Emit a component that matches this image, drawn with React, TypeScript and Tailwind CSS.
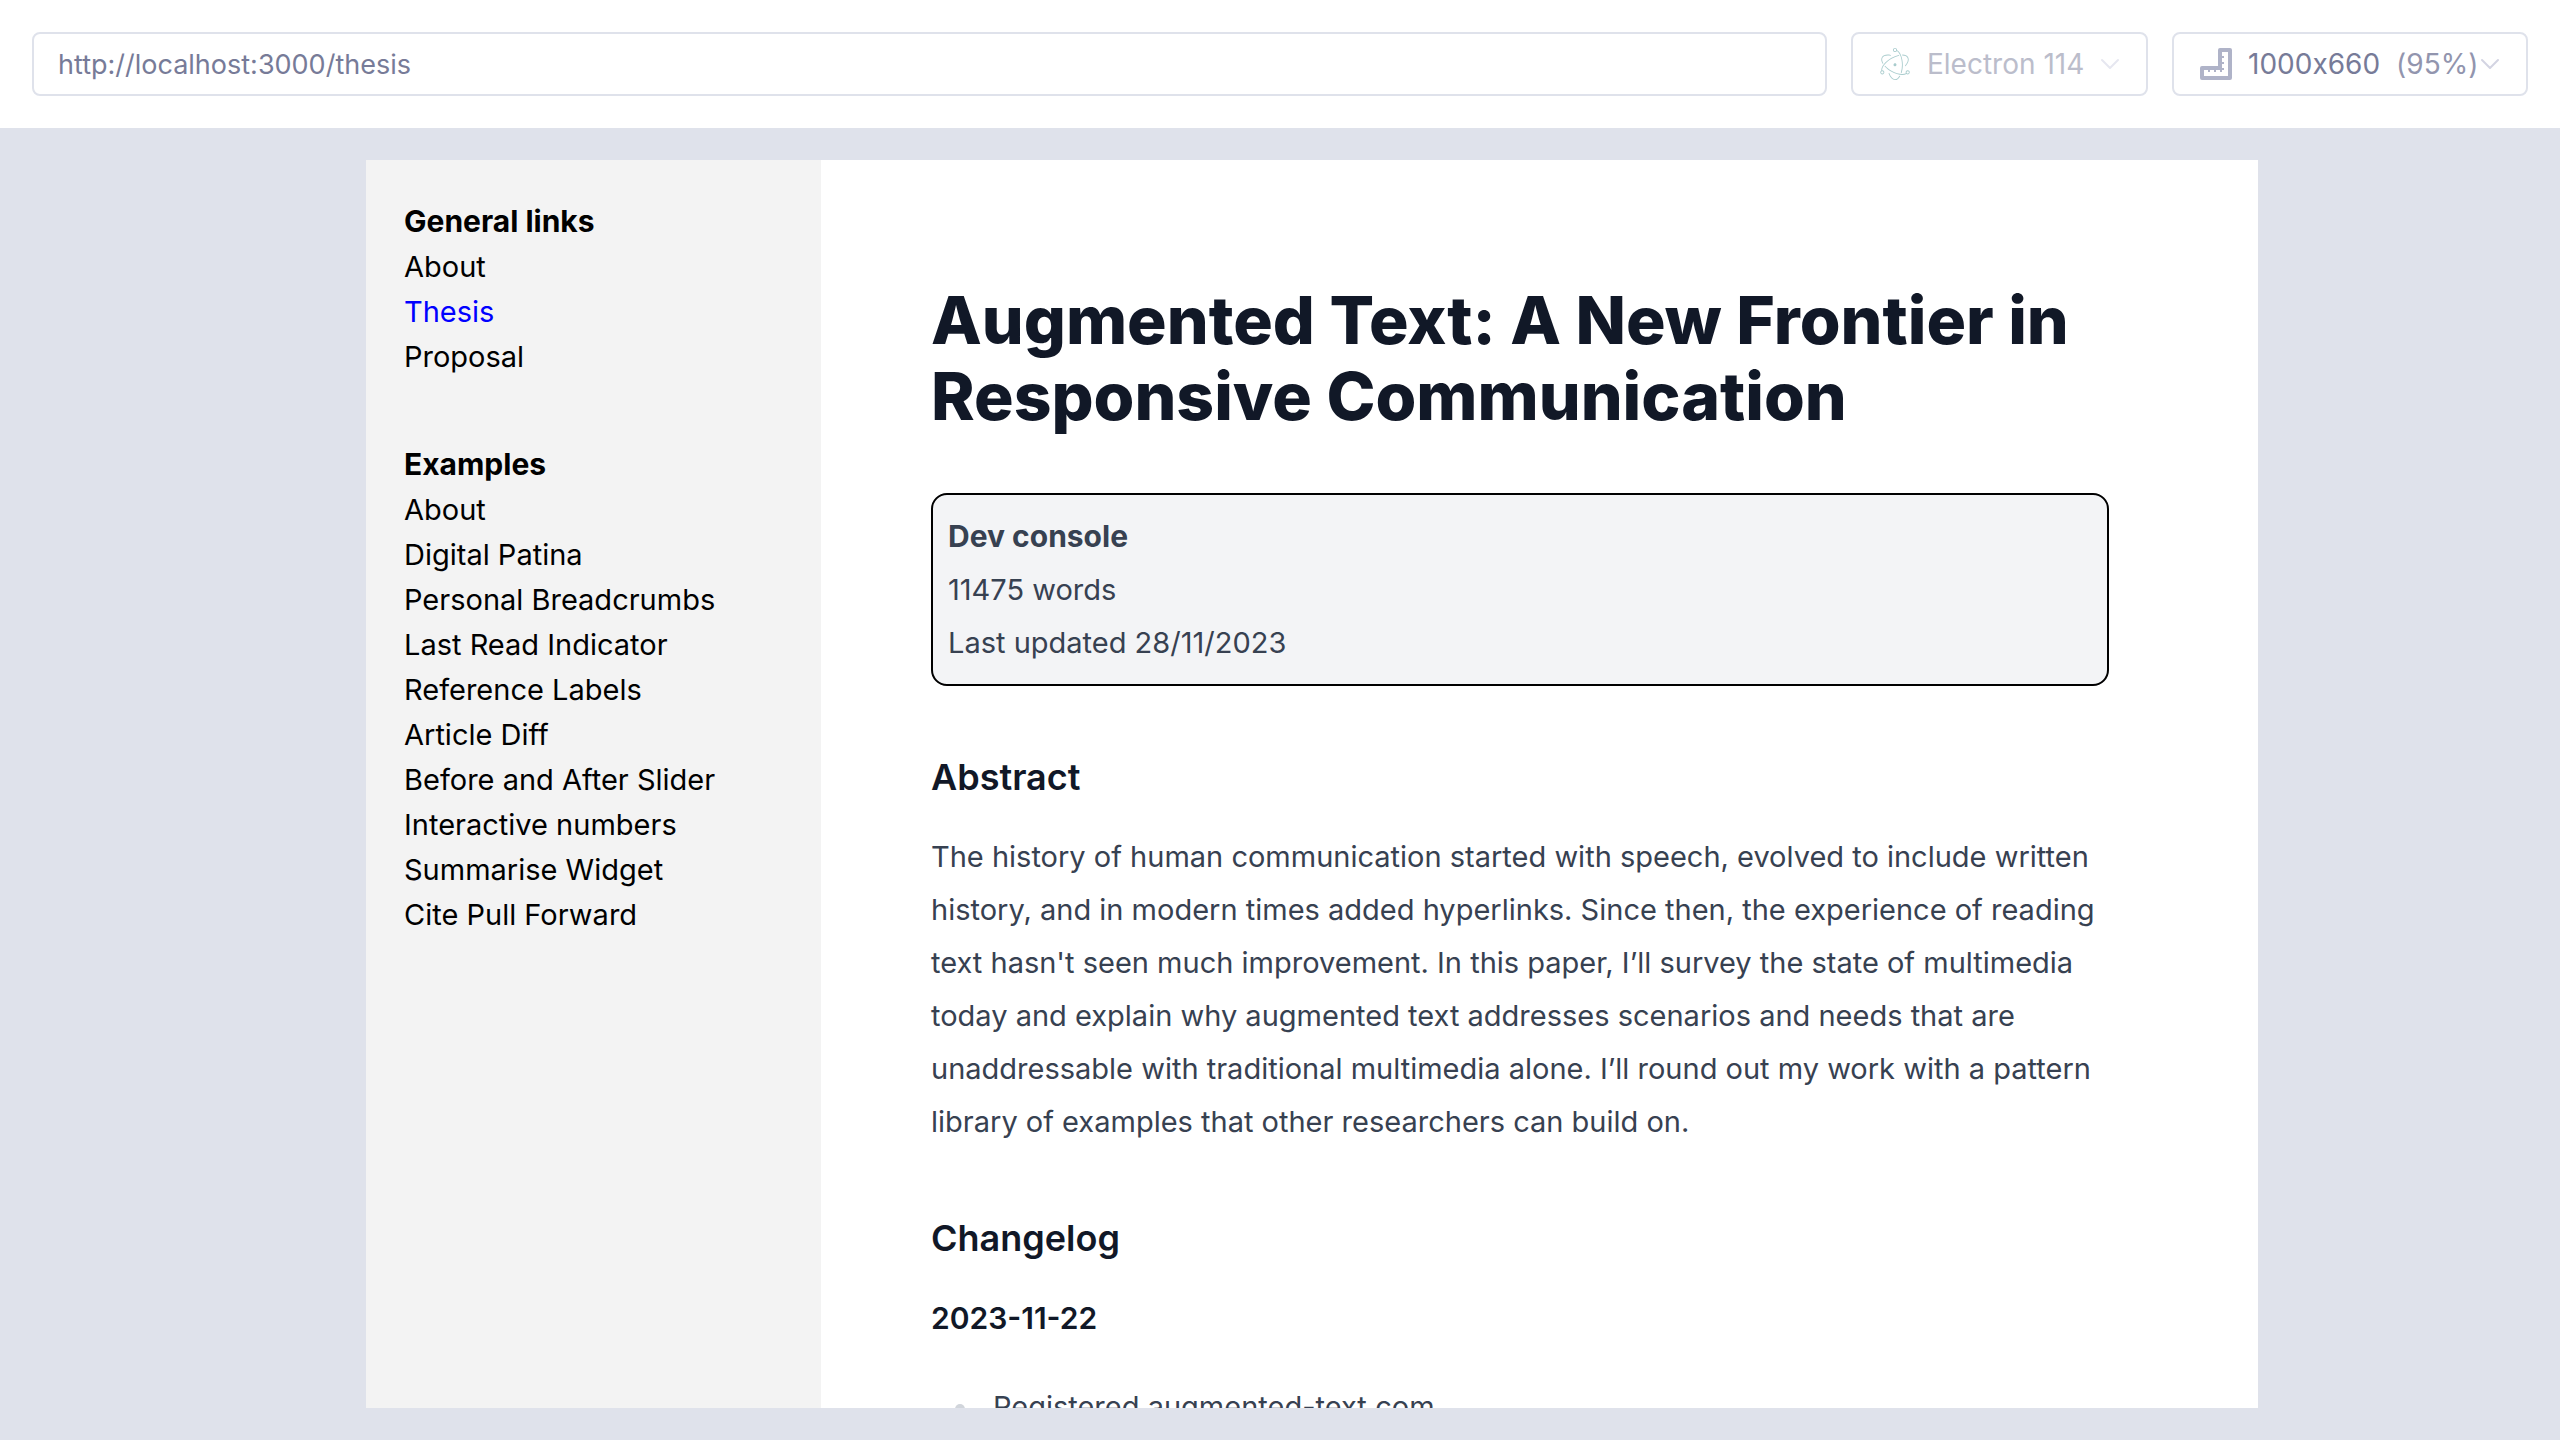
import { useState } from "react";
import { SiElectron } from "react-icons/si";

const generalLinks = ["About", "Thesis", "Proposal"];

const exampleLinks = [
  "About",
  "Digital Patina",
  "Personal Breadcrumbs",
  "Last Read Indicator",
  "Reference Labels",
  "Article Diff",
  "Before and After Slider",
  "Interactive numbers",
  "Summarise Widget",
  "Cite Pull Forward",
];

function ChevronIcon({ className }: { className: string }) {
  return (
    <svg viewBox="0 0 20 12" className={className} fill="none" aria-hidden="true">
      <path d="M2 2l8 8 8-8" stroke="currentColor" strokeWidth="2" strokeLinecap="round" strokeLinejoin="round" />
    </svg>
  );
}

function RulerIcon() {
  return (
    <svg viewBox="0 0 32 32" className="size-8 shrink-0 text-[#afb3c8]" fill="none" aria-hidden="true">
      <path
        d="M20 2h10v28H2V20h18z"
        stroke="currentColor"
        strokeWidth="4"
        strokeLinejoin="round"
      />
      <path
        d="M22 9h2M22 15h2M21 21h3M9 22v2M15 22v2M21 21v3"
        stroke="currentColor"
        strokeWidth="2"
      />
    </svg>
  );
}

function Toolbar() {
  const [url, setUrl] = useState("http://localhost:3000/thesis");
  return (
    <header className="flex h-32 shrink-0 items-center gap-6 bg-white px-8 text-[28px] [font-feature-settings:'calt'_0]">
      <input
        type="text"
        aria-label="Page address"
        value={url}
        onChange={(e) => setUrl(e.target.value)}
        className="h-16 min-w-0 flex-1 rounded-lg border-2 border-[#dfe2eb] bg-white px-6 text-[27px] text-[#777b98] outline-none"
      />
      <button
        type="button"
        disabled
        className="flex h-16 w-[297px] items-center rounded-lg border-2 border-[#dfe2eb] px-[26px] text-[#bbbdcb]"
      >
        <SiElectron className="size-8 shrink-0 text-[#a9cccd]" aria-hidden="true" />
        <span className="ml-4 flex-1 text-left whitespace-nowrap">Electron 114</span>
        <ChevronIcon className="h-3 w-5 shrink-0 text-[#e6e7f0]" />
      </button>
      <button
        type="button"
        className="flex h-16 w-[356px] items-center rounded-lg border-2 border-[#dfe2eb] px-[26px] text-[#777b98]"
      >
        <RulerIcon />
        <span className="ml-4 whitespace-nowrap">1000x660</span>
        <span className="ml-4 flex-1 text-left text-[#9295ae]">(95%)</span>
        <ChevronIcon className="h-3 w-5 shrink-0 text-[#d3d4e2]" />
      </button>
    </header>
  );
}

function LinkGroup({ title, links, current }: { title: string; links: string[]; current?: string }) {
  return (
    <section>
      <h2 className="text-[30px] leading-[46px] font-bold">{title}</h2>
      <ul>
        {links.map((name) => (
          <li key={name}>
            <a
              href="#"
              aria-current={name === current ? "page" : undefined}
              className={name === current ? "text-[#0000ff]" : "text-black"}
            >
              {name}
            </a>
          </li>
        ))}
      </ul>
    </section>
  );
}

function Sidebar() {
  return (
    <nav className="flex w-[455px] shrink-0 flex-col gap-[62px] bg-[#f3f3f3] px-[38px] pt-[38px] text-[29px] leading-[45px] text-black">
      <LinkGroup title="General links" links={generalLinks} current="Thesis" />
      <LinkGroup title="Examples" links={exampleLinks} />
    </nav>
  );
}

function Article() {
  return (
    <main className="min-w-0 flex-1 bg-white px-[110px] pt-[122px]">
      <article className="max-w-[1178px] text-[29px] leading-[53px] text-[#374151]">
        <h1 className="text-[66px] leading-[76px] font-extrabold text-[#111827]">
          Augmented Text: A New Frontier in Responsive Communication
        </h1>
        <div className="mt-[59px] rounded-2xl border-2 border-black bg-[#f3f4f6] p-[15px]">
          <p className="text-[30px] leading-[53px] font-bold">Dev console</p>
          <p>11475 words</p>
          <p>Last updated 28/11/2023</p>
        </div>
        <h2 className="mt-[61px] text-[36px] leading-[61px] font-semibold text-[#111827]">Abstract</h2>
        <p className="mt-[22px]">
          The history of human communication started with speech, evolved to include written history, and in modern
          times added hyperlinks. Since then, the experience of reading text hasn't seen much improvement. In this
          paper, I’ll survey the state of multimedia today and explain why augmented text addresses scenarios and needs
          that are unaddressable with traditional multimedia alone. I’ll round out my work with a pattern library of
          examples that other researchers can build on.
        </p>
        <h2 className="mt-[60px] text-[36px] leading-[61px] font-semibold text-[#111827]">Changelog</h2>
        <h3 className="mt-[27px] text-[30px] leading-[45px] font-semibold text-[#111827]">2023-11-22</h3>
        <ul className="mt-[39px] pl-6">
          <li className="flex items-center">
            <span className="mt-1 mr-7 size-2.5 shrink-0 rounded-full bg-[#d1d5db]" aria-hidden="true" />
            Registered augmented-text.com
          </li>
        </ul>
      </article>
    </main>
  );
}

export default function App() {
  return (
    <div className="flex h-screen flex-col bg-[#dfe2eb] font-['Inter',sans-serif]">
      <Toolbar />
      <div className="flex min-h-0 flex-1 justify-center py-8 pl-16">
        <div className="flex w-full max-w-[1892px] overflow-hidden">
          <Sidebar />
          <Article />
        </div>
      </div>
    </div>
  );
}
